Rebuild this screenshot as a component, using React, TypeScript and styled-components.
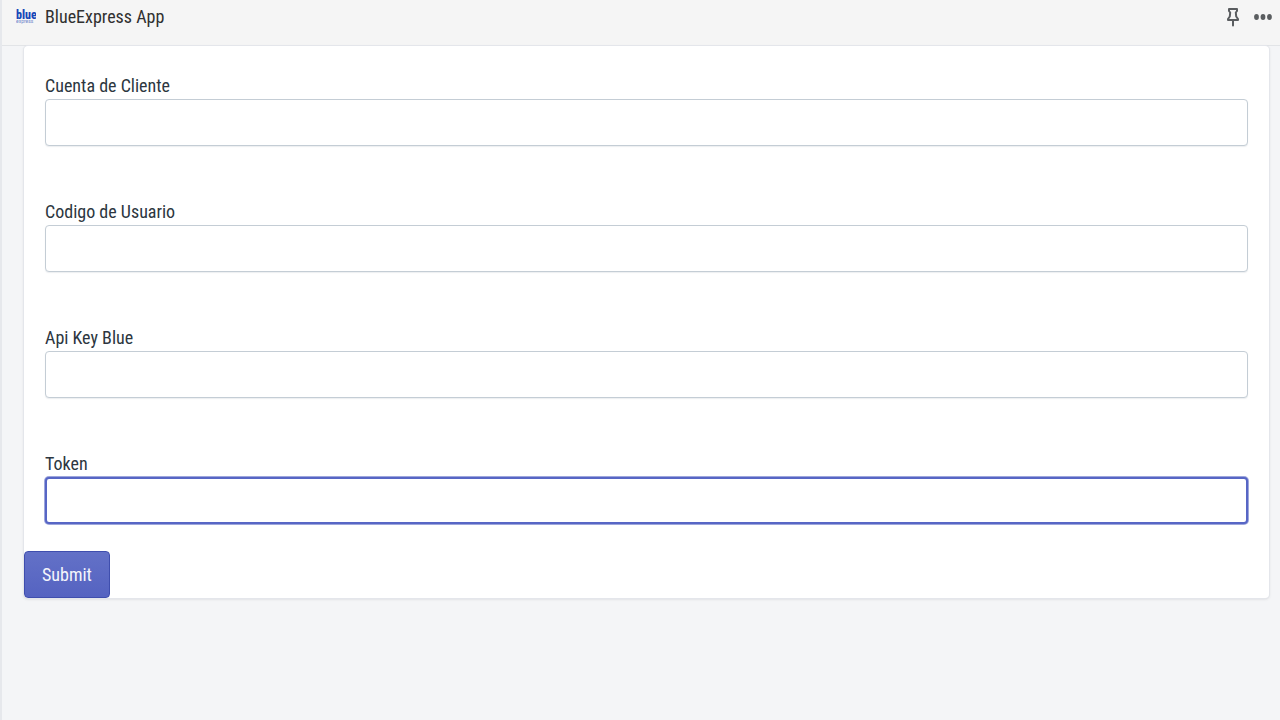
import React from "react";
import styled, { createGlobalStyle, css } from "styled-components";

const GlobalStyle = createGlobalStyle`
  *, *::before, *::after { box-sizing: border-box; }
  html { background: #f4f5f7; }
  body {
    margin: 0;
    color: #2c3640;
    font-family: "Roboto Condensed", Roboto, sans-serif;
    font-size: 18px;
    line-height: 26px;
  }
`;

const Shell = styled.div`
  min-height: 100vh;
  border-left: 2px solid #e6e8ec;
`;

const TopBar = styled.header`
  display: flex;
  align-items: center;
  height: 46px;
  padding: 0 8px 11px 14px;
  background: #f5f5f5;
  border-bottom: 1px solid #e2e4e7;
`;

const Logo = styled.svg`
  flex: none;
  width: 20px;
  height: 16px;
  margin-right: 9px;
`;

const Title = styled.h1`
  flex: 1;
  margin: 0;
  color: #303030;
  font-size: inherit;
  font-weight: 400;
`;

const Actions = styled.div`
  display: flex;
  align-items: center;
  gap: 15px;
`;

const IconButton = styled.button`
  display: flex;
  padding: 0;
  border: 0;
  background: none;
  color: #5a5d60;
  cursor: pointer;
`;

const Card = styled.form`
  margin: 0 11px 0 22px;
  padding-top: 27px;
  background: #fff;
  border-radius: 4px;
  box-shadow: 0 0 0 1px #e4e6eb, 0 1px 3px rgba(63, 63, 68, 0.18);
`;

const Field = styled.div`
  display: flex;
  flex-direction: column;
  padding: 0 21px;

  & + & {
    margin-top: 53px;
  }
`;

const Label = styled.label`
  line-height: 26px;
`;

const Input = styled.input<{ $active?: boolean }>`
  width: 100%;
  height: 47px;
  padding: 0 14px;
  border: 1px solid #c4cdd5;
  border-radius: 4px;
  background: #fff;
  color: inherit;
  font: inherit;
  outline: none;
  box-shadow: 0 1px 1px rgba(99, 115, 129, 0.12);

  ${({ $active }) =>
    $active &&
    css`
      border: 2px solid #5766c5;
      box-shadow: 0 0 0 1px rgba(92, 106, 196, 0.6);
    `}
`;

const SubmitButton = styled.button`
  height: 47px;
  margin-top: 27px;
  padding: 0 17px;
  display: block;
  border: 1px solid #3f4eae;
  border-radius: 4px;
  background: linear-gradient(#6371c7, #5563c1);
  color: #f4f5fb;
  font: inherit;
  cursor: pointer;
`;

const fields = [
  { id: "account", label: "Cuenta de Cliente" },
  { id: "user", label: "Codigo de Usuario" },
  { id: "apiKey", label: "Api Key Blue" },
  { id: "token", label: "Token", active: true },
];

const BlueLogo = () => (
  <Logo viewBox="0 0 20 16" aria-label="Blue Express">
    <text x="0" y="10" fill="#1746b8" fontFamily="Roboto Condensed, sans-serif" fontWeight="800" fontSize="12">
      blue
    </text>
    <text x="0" y="14" fill="#7088cc" fontFamily="Roboto, sans-serif" fontSize="5">
      express
    </text>
  </Logo>
);

const PinIcon = () => (
  <svg width="12" height="20" viewBox="0 0 12 20" fill="none" stroke="currentColor" strokeWidth="2" strokeLinejoin="round">
    <path d="M2 2h8v2L8.800 5.500 9.200 9.500 11 12v1H1v-1l1.800-2.500L3.200 5.500 2 4z" />
    <path d="M6 13v5.500" strokeLinecap="round" />
  </svg>
);

const MoreIcon = () => (
  <svg width="18" height="6" viewBox="0 0 18 6" fill="currentColor">
    <ellipse cx="2.500" cy="3" rx="2.400" ry="2.900" />
    <ellipse cx="9" cy="3" rx="2.400" ry="2.900" />
    <ellipse cx="15.500" cy="3" rx="2.400" ry="2.900" />
  </svg>
);

export default function App() {
  return (
    <Shell>
      <GlobalStyle />
      <TopBar>
        <BlueLogo />
        <Title>BlueExpress App</Title>
        <Actions>
          <IconButton type="button" aria-label="Pin">
            <PinIcon />
          </IconButton>
          <IconButton type="button" aria-label="More actions">
            <MoreIcon />
          </IconButton>
        </Actions>
      </TopBar>
      <main>
        <Card onSubmit={(event) => event.preventDefault()}>
          {fields.map(({ id, label, active }) => (
            <Field key={id}>
              <Label htmlFor={id}>{label}</Label>
              <Input id={id} name={id} type="text" $active={active} />
            </Field>
          ))}
          <SubmitButton type="submit">Submit</SubmitButton>
        </Card>
      </main>
    </Shell>
  );
}
